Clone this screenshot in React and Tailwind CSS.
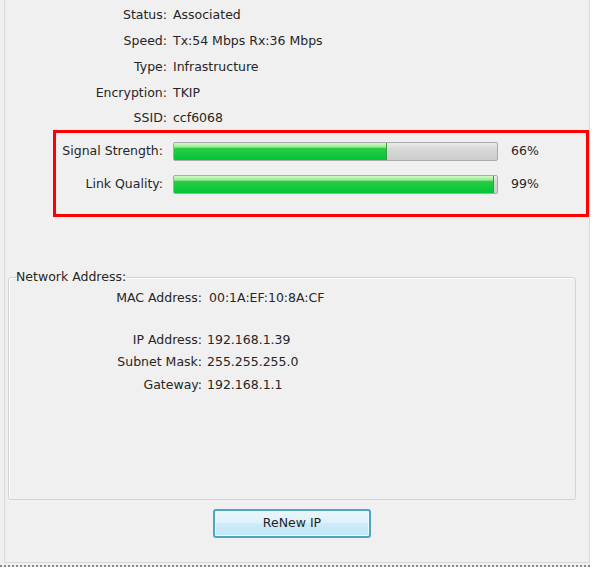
import React from "react";

const font = { fontFamily: '"DejaVu Sans", Verdana, sans-serif' };

const info = [
  { label: "Status:", value: "Associated", h: "h-[26px]" },
  { label: "Speed:", value: "Tx:54 Mbps Rx:36 Mbps", h: "h-[26px]" },
  { label: "Type:", value: "Infrastructure", h: "h-[26px]" },
  { label: "Encryption:", value: "TKIP", h: "h-[26px]" },
  { label: "SSID:", value: "ccf6068", h: "h-[25px]" },
];

function Bar({ label, pct }) {
  return (
    <div className="flex items-center h-[20px]">
      <span className="w-[107px] text-right">{label}</span>
      <div className="ml-[10px] w-[325px] h-[19px] rounded-[2px] border border-[#a9a9a9] bg-[linear-gradient(to_bottom,#ececec_0%,#d9d9d9_30%,#cdcdcd_100%)] overflow-hidden flex">
        <div
          className="h-full bg-[linear-gradient(to_bottom,#d2fbcb_0%,#97ec8f_24%,#2ccb48_32%,#00c633_100%)] border-r border-[#3a9a45]"
          style={{ width: `${pct}%` }}
        />
      </div>
      <span className="ml-[13px]">{pct}%</span>
    </div>
  );
}

function AddrRow({ label, value, className = "", gap = "ml-[5px]" }) {
  return (
    <div className={`flex items-center h-[22px] ${className}`}>
      <span className="w-[185px] text-right">{label}</span>
      <span className={gap}>{value}</span>
    </div>
  );
}

export default function App() {
  return (
    <div className="w-[595px] h-[569px] bg-white" style={font}>
      <div className="w-[590px] h-[567px] bg-[#f0f0f0] border-b-2 border-dotted border-[#8a8a8a] pl-[4px]">
        <div className="h-[563px] border-x border-b border-[#dadada] text-[12.5px] text-[#262626]">
          <div className="pt-[2px] -ml-[4px]">
            {info.map((r) => (
              <div key={r.label} className={`flex items-center ${r.h}`}>
                <span className="w-[166px] text-right">{r.label}</span>
                <span className="ml-[6px]">{r.value}</span>
              </div>
            ))}
          </div>

          <div className="-mt-[1px] ml-[48px] w-[536px] h-[87px] border-[3px] border-[#ff0000] pt-[8px] flex flex-col gap-[13px]">
            <Bar label="Signal Strength:" pct={66} />
            <Bar label="Link Quality:" pct={99} />
          </div>

          <fieldset className="mt-[52px] ml-[3px] w-[568px] h-[231px] border border-[#d3d3d3] rounded-[3px] shadow-[inset_1px_1px_0_#ffffff] px-[8px]">
            <legend className="px-0 leading-[16px] -ml-[1px]">Network Address:</legend>
            <AddrRow className="mt-[2px]" label="MAC Address:" value="00:1A:EF:10:8A:CF" gap="ml-[7px]" />
            <AddrRow className="mt-[20px]" label="IP Address:" value="192.168.1.39" />
            <AddrRow label="Subnet Mask:" value="255.255.255.0" />
            <AddrRow className="mt-[1px]" label="Gateway:" value="192.168.1.1" />
          </fieldset>

          <button className="mt-[9px] ml-[208px] w-[158px] h-[29px] rounded-[3px] border-2 border-[#4aa7c0] bg-[linear-gradient(to_bottom,#eaf6fc_0%,#dff2fb_45%,#cdebf9_52%,#c3e6f7_100%)] shadow-[inset_0_0_0_1px_#eef9fe] flex items-center justify-center text-[#1f1f1f]">
            ReNew IP
          </button>
        </div>
      </div>
    </div>
  );
}
